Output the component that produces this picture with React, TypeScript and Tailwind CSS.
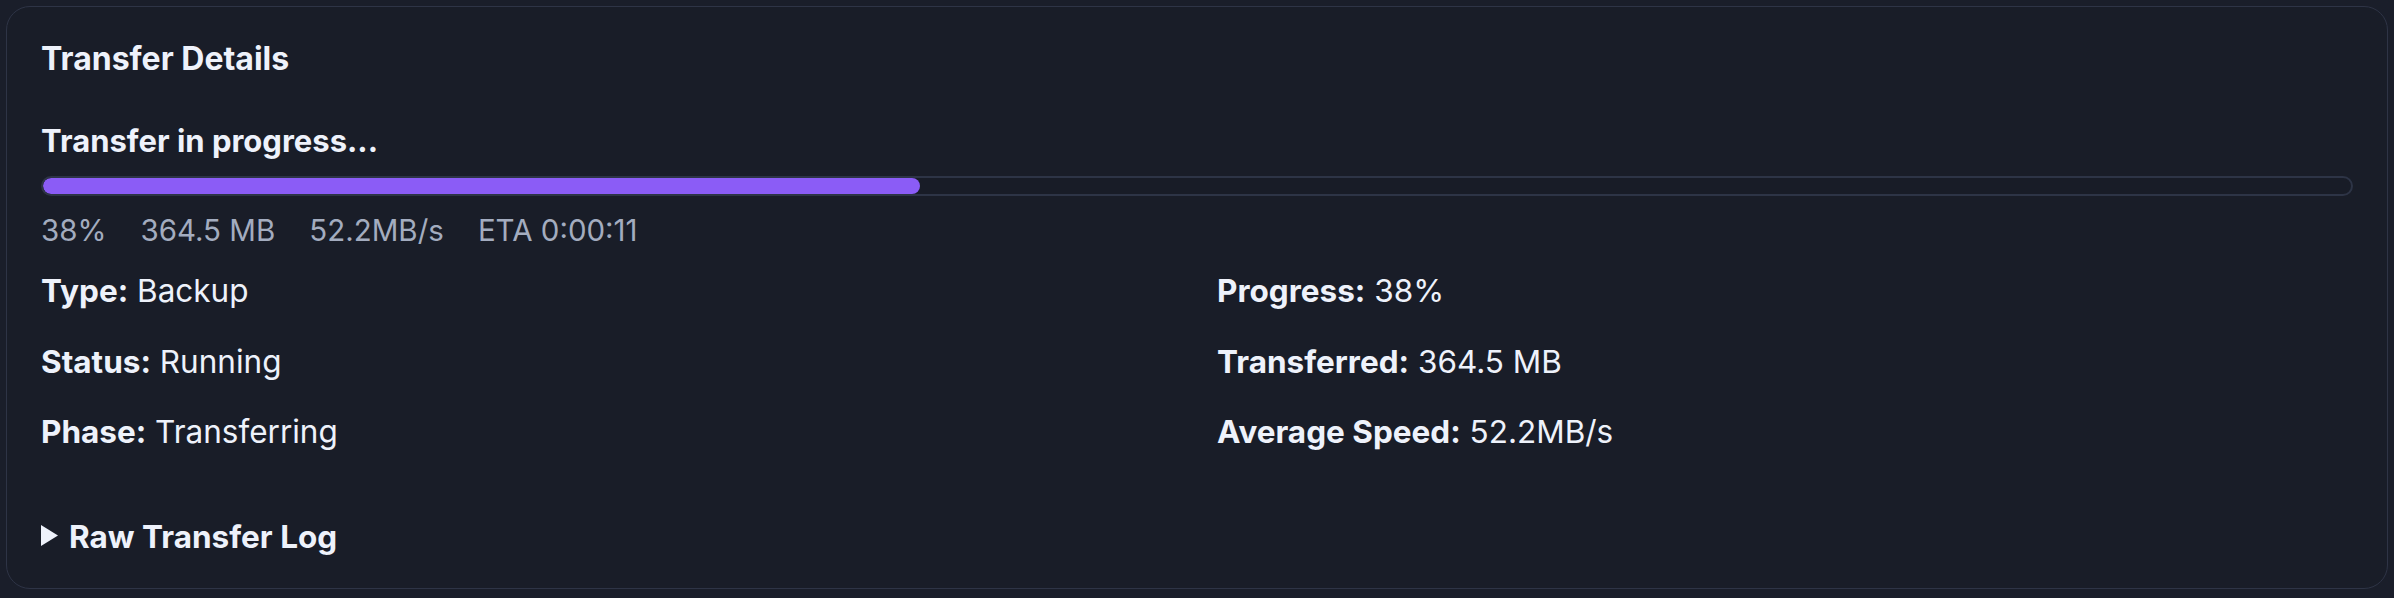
import React from "react";

const stats = ["38%", "364.5 MB", "52.2MB/s", "ETA 0:00:11"];

const left = [
  ["Type:", "Backup"],
  ["Status:", "Running"],
  ["Phase:", "Transferring"],
];

const right = [
  ["Progress:", "38%"],
  ["Transferred:", "364.5 MB"],
  ["Average Speed:", "52.2MB/s"],
];

function Field({ label, value }: { label: string; value: string }) {
  return (
    <div className="leading-[48px]">
      <span className="font-bold">{label}</span> <span>{value}</span>
    </div>
  );
}

export default function App() {
  const pct = 38;
  return (
    <div
      className="min-h-[598px] bg-[#1a1e2a] p-[6px] text-[31.5px] text-[#eef2fb]"
      style={{ fontFamily: "Inter, 'Noto Sans', sans-serif" }}
    >
      <div className="rounded-[24px] border border-[#2e3446] bg-[#191d28] px-[34px] pt-[28px] pb-[27px]">
        <h2 className="text-[32px] font-bold leading-[48px]">Transfer Details</h2>

        <div className="mt-[34px] text-[31px] font-bold leading-[48px]">Transfer in progress...</div>

        <div className="mt-[11px] h-[20px] w-full overflow-hidden rounded-full border-2 border-[#2d3446] bg-[#181c27]">
          <div className="h-full rounded-full bg-[#8b5cf6]" style={{ width: `${pct}%` }} />
        </div>

        <div className="mt-[10px] flex gap-[34px] text-[29.5px] leading-[48px] text-[#a3acbf]">
          {stats.map((s) => (
            <span key={s}>{s}</span>
          ))}
        </div>

        <div className="mt-[13px] grid grid-cols-2 gap-x-[40px]">
          <div className="flex flex-col gap-[22.5px]">
            {left.map(([l, v]) => (
              <Field key={l} label={l} value={v} />
            ))}
          </div>
          <div className="flex flex-col gap-[22.5px]">
            {right.map(([l, v]) => (
              <Field key={l} label={l} value={v} />
            ))}
          </div>
        </div>

        <details className="mt-[57px]">
          <summary className="flex cursor-pointer list-none items-center gap-[11px] font-bold leading-[48px] [&::-webkit-details-marker]:hidden">
            <svg width="17" height="21" viewBox="0 0 17 21" className="mt-[-4px] shrink-0">
              <path d="M0 0 L17 10.5 L0 21 Z" fill="#eef2fb" />
            </svg>
            <span>Raw Transfer Log</span>
          </summary>
        </details>
      </div>
    </div>
  );
}
